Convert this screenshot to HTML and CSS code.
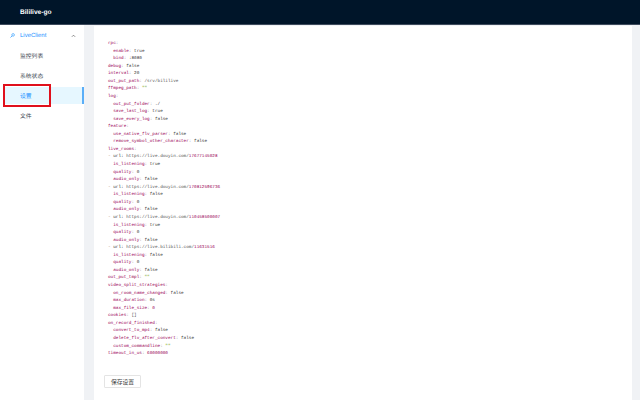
FILE: index.html
```html
<!DOCTYPE html>
<html lang="zh">
<head>
<meta charset="utf-8">
<title>Bililive-go</title>
<link rel="stylesheet" href="styles.css">
</head>
<body>
<header class="topbar"><span class="logo">Bililive-go</span></header>
<div class="layout">
  <aside class="sider">
    <div class="submenu">
      <svg class="sub-icon" viewBox="0 0 10 10"><circle cx="6.2" cy="3.8" r="2.6" fill="none" stroke="currentColor" stroke-width="1.2"/><path d="M4.3 5.7 1 9" stroke="currentColor" stroke-width="1.4" fill="none"/></svg>
      <span class="sub-title">LiveClient</span>
      <svg class="chevron" viewBox="0 0 6 4"><path d="M1 3 3 1l2 2" stroke="#444" stroke-width=".7" fill="none"/></svg>
    </div>
    <nav class="menu">
      <a class="item">监控列表</a>
      <a class="item">系统状态</a>
      <a class="item selected">设置<span class="annot"></span></a>
      <a class="item">文件</a>
    </nav>
  </aside>
  <main class="content">
    <section class="card">
<pre class="code"><span class="k">rpc</span><span class="p">:</span>
  <span class="k">enable</span><span class="p">:</span> <span class="v">true</span>
  <span class="k">bind</span><span class="p">:</span> <span class="v">:8080</span>
<span class="k">debug</span><span class="p">:</span> <span class="v">false</span>
<span class="k">interval</span><span class="p">:</span> <span class="v">20</span>
<span class="k">out_put_path</span><span class="p">:</span> <span class="u">/srv/bililive</span>
<span class="k">ffmpeg_path</span><span class="p">:</span> <span class="s">""</span>
<span class="k">log</span><span class="p">:</span>
  <span class="k">out_put_folder</span><span class="p">:</span> <span class="v">./</span>
  <span class="k">save_last_log</span><span class="p">:</span> <span class="v">true</span>
  <span class="k">save_every_log</span><span class="p">:</span> <span class="v">false</span>
<span class="k">feature</span><span class="p">:</span>
  <span class="k">use_native_flv_parser</span><span class="p">:</span> <span class="v">false</span>
  <span class="k">remove_symbol_other_character</span><span class="p">:</span> <span class="v">false</span>
<span class="k">live_rooms</span><span class="p">:</span>
<span class="d">-</span> <span class="v">url:</span> <span class="u">https://live.douyin.com/</span><span class="k">17677145028</span>
  <span class="k">is_listening</span><span class="p">:</span> <span class="v">true</span>
  <span class="k">quality</span><span class="p">:</span> <span class="v">0</span>
  <span class="k">audio_only</span><span class="p">:</span> <span class="v">false</span>
<span class="d">-</span> <span class="v">url:</span> <span class="u">https://live.douyin.com/</span><span class="k">170812596736</span>
  <span class="k">is_listening</span><span class="p">:</span> <span class="v">false</span>
  <span class="k">quality</span><span class="p">:</span> <span class="v">0</span>
  <span class="k">audio_only</span><span class="p">:</span> <span class="v">false</span>
<span class="d">-</span> <span class="v">url:</span> <span class="u">https://live.douyin.com/</span><span class="k">110458500007</span>
  <span class="k">is_listening</span><span class="p">:</span> <span class="v">true</span>
  <span class="k">quality</span><span class="p">:</span> <span class="v">0</span>
  <span class="k">audio_only</span><span class="p">:</span> <span class="v">false</span>
<span class="d">-</span> <span class="v">url:</span> <span class="u">https://live.bilibili.com/</span><span class="k">11631516</span>
  <span class="k">is_listening</span><span class="p">:</span> <span class="v">false</span>
  <span class="k">quality</span><span class="p">:</span> <span class="v">0</span>
  <span class="k">audio_only</span><span class="p">:</span> <span class="v">false</span>
<span class="k">out_put_tmpl</span><span class="p">:</span> <span class="s">""</span>
<span class="k">video_split_strategies</span><span class="p">:</span>
  <span class="k">on_room_name_changed</span><span class="p">:</span> <span class="v">false</span>
  <span class="k">max_duration</span><span class="p">:</span> <span class="v">0s</span>
  <span class="k">max_file_size</span><span class="p">:</span> <span class="k">0</span>
<span class="k">cookies</span><span class="p">:</span> <span class="u">[]</span>
<span class="k">on_record_finished</span><span class="p">:</span>
  <span class="k">convert_to_mp4</span><span class="p">:</span> <span class="v">false</span>
  <span class="k">delete_flv_after_convert</span><span class="p">:</span> <span class="v">false</span>
  <span class="k">custom_commandline</span><span class="p">:</span> <span class="s">""</span>
<span class="k">timeout_in_us</span><span class="p">:</span> <span class="k">60000000</span></pre>
      <button class="save">保存设置</button>
    </section>
  </main>
</div>
</body>
</html>
```
FILE: styles.css
```css
* { box-sizing: border-box; }
html, body { margin: 0; height: 100%; overflow: hidden; }
body { background: #f0f2f5; font-family: "Noto Sans CJK SC", "Liberation Sans", sans-serif; display: flex; flex-direction: column; height: 400px; text-rendering: geometricPrecision; }
.topbar { height: 25px; flex: none; background: #001529; display: flex; align-items: center; padding-left: 20px; border-bottom: 1px solid #3d4a5c; }
.logo { color: #fff; font: 700 6.6px "Liberation Sans", sans-serif; }
.layout { flex: 1; display: flex; min-height: 0; }
.sider { width: 84px; flex: none; background: #fff; padding-top: 2px; }
.submenu { height: 17px; display: flex; align-items: center; padding-left: 10px; color: #1890ff; }
.sub-icon { width: 5px; height: 5px; margin-right: 5px; }
.sub-title { font: 6px "Liberation Sans", sans-serif; flex: 1; }
.chevron { width: 5px; height: 4px; margin-right: 8px; }
.menu { display: flex; flex-direction: column; gap: 3px; margin-top: 3px; }
.item { position: relative; height: 17px; display: flex; align-items: center; padding-left: 20px; font-size: 5.8px; color: #3c4650; }
.selected { margin-left: 3px; padding-left: 17px; background: #e6f7ff; color: #1890ff; border-right: 2px solid #5aaef8; }
.annot { position: absolute; left: 0; top: -3.5px; width: 48px; height: 23px; border: 2px solid #e0101c; }
.content { flex: 1; min-width: 0; padding: 1px 8px 0 10px; }
.card { background: #fff; height: 100%; padding: 14px 0 0 14px; }
.code { margin: 0; font: 4.35px/7.56px "Liberation Mono", monospace; color: #333; height: 319px; }
.k { color: #990055; }
.p { color: #999; }
.v { color: #333; }
.u { color: #555; }
.s { color: #669900; }
.d { color: #a67f59; }
.save { display: block; margin: 16px 0 0 -4px; width: 37px; height: 13px; padding: 0; background: #fff; border: 1px solid #e4e4e4; border-radius: 1px; font: 5.8px "Noto Sans CJK SC", sans-serif; color: #444; }
```
